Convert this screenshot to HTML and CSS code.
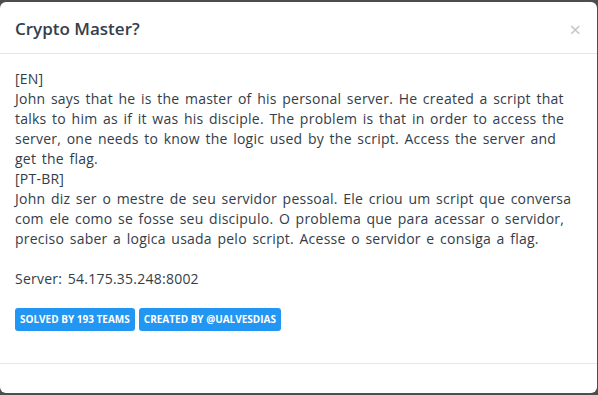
FILE: index.html
```html
<!DOCTYPE html>
<html lang="en">
<head>
    <meta charset="UTF-8">
    <meta name="viewport" content="width=device-width, initial-scale=1.0">
    <title>Crypto Master?</title>
    <link rel="stylesheet" href="styles.css">
</head>
<body>
    <div class="modal">
        <div class="modal-header">
            <h4 class="modal-title">Crypto Master?</h4>
            <span class="close">&times;</span>
        </div>

        <div class="modal-body">
            <p class="description">
                [EN]<br>
                John says that he is the master of his personal server. He created a script that talks to him as if it was his disciple. The problem is that in order to access the server, one needs to know the logic used by the script. Access the server and get the flag.<br>
                [PT-BR]<br>
                John diz ser o mestre de seu servidor pessoal. Ele criou um script que conversa com ele como se fosse seu discipulo. O problema que para acessar o servidor, preciso saber a logica usada pelo script. Acesse o servidor e consiga a flag.<br>
                <br>
                Server: 54.175.35.248:8002
            </p>

            <div class="badges">
                <span class="badge">Solved by 193 teams</span>
                <span class="badge">Created by @ualvesdias</span>
            </div>
        </div>

        <div class="modal-footer"></div>
    </div>
</body>
</html>
```

FILE: styles.css
```css
* {
    margin: 0;
    padding: 0;
    box-sizing: border-box;
}

html, body {
    height: 100%;
    background: #4d4d4d;
    font-family: 'Open Sans', 'DejaVu Sans', sans-serif;
    color: #3e4853;
    overflow: hidden;
}

.modal {
    margin-top: 2px;
    width: 597px;
    height: 391px;
    background: #fff;
    border-radius: 6px;
    display: flex;
    flex-direction: column;
}

.modal-header {
    height: 52px;
    padding: 0 15px;
    border-bottom: 1px solid #e3e8ee;
    display: flex;
    align-items: center;
    justify-content: space-between;
}

.modal-title {
    font-size: 17px;
    font-weight: 600;
    color: #35404c;
    margin-top: 1px;
}

.close {
    font-size: 20px;
    color: #c4c4c4;
    margin-top: 3px;
    margin-right: 1px;
}

.modal-body {
    flex: 1;
    padding: 15px 15px 0;
}

.description {
    font-size: 14px;
    line-height: 20px;
    letter-spacing: 0.24px;
    word-spacing: 1.7px;
    color: #333d48;
}

.badges {
    margin-top: 19px;
    display: flex;
    gap: 4px;
}

.badge {
    background: #2196f3;
    color: #fff;
    font-size: 10px;
    font-weight: 700;
    text-transform: uppercase;
    height: 23px;
    line-height: 23px;
    padding: 0 5px;
    border-radius: 3px;
}

.modal-footer {
    height: 30px;
    border-top: 1px solid #e3e8ee;
}
```
